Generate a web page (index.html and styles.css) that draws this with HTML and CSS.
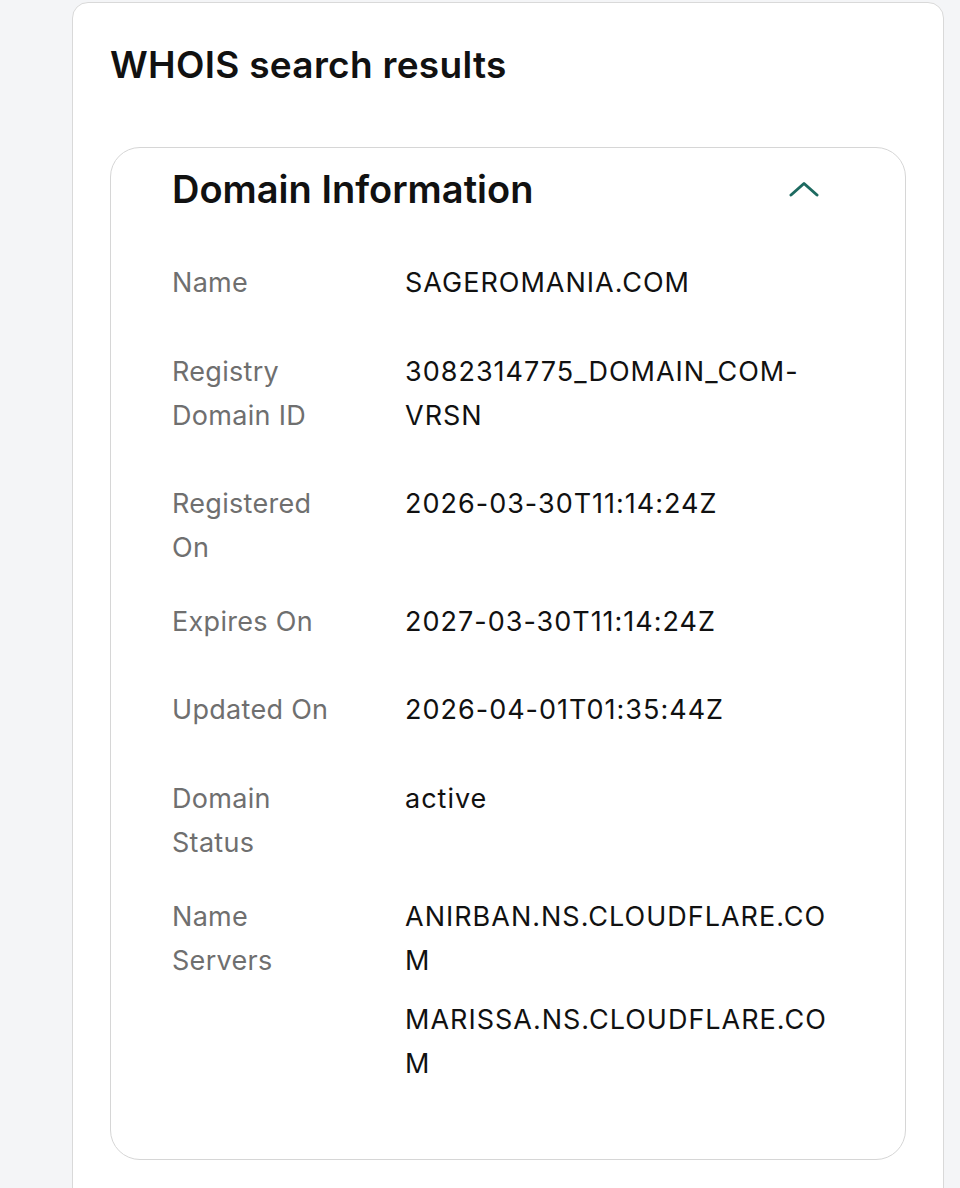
FILE: index.html
```html
<!DOCTYPE html>
<html lang="en">
<head>
<meta charset="utf-8">
<title>WHOIS search results</title>
<link rel="stylesheet" href="styles.css">
</head>
<body>
<div class="page">
  <section class="card">
    <h1 class="title">WHOIS search results</h1>
    <div class="panel">
      <div class="panel-head">
        <h2 class="panel-title">Domain Information</h2>
        <button class="toggle" aria-label="Collapse">
          <svg width="30" height="16" viewBox="0 0 30 16"><path d="M2 14 L15 2.5 L28 14" fill="none" stroke="#1d6a60" stroke-width="3" stroke-linecap="round" stroke-linejoin="round"/></svg>
        </button>
      </div>
      <dl class="info">
        <div class="row"><dt>Name</dt><dd><p>SAGEROMANIA.COM</p></dd></div>
        <div class="row"><dt>Registry Domain ID</dt><dd><p>3082314775_DOMAIN_COM-VRSN</p></dd></div>
        <div class="row"><dt>Registered On</dt><dd><p>2026-03-30T11:14:24Z</p></dd></div>
        <div class="row"><dt>Expires On</dt><dd><p>2027-03-30T11:14:24Z</p></dd></div>
        <div class="row"><dt>Updated On</dt><dd><p>2026-04-01T01:35:44Z</p></dd></div>
        <div class="row"><dt>Domain Status</dt><dd><p>active</p></dd></div>
        <div class="row"><dt>Name Servers</dt><dd><p>ANIRBAN.NS.CLOUDFLARE.COM</p><p>MARISSA.NS.CLOUDFLARE.COM</p></dd></div>
      </dl>
    </div>
  </section>
</div>
</body>
</html>
```

FILE: styles.css
```css
* { box-sizing: border-box; }
html, body { margin: 0; padding: 0; }
body {
  background: #f4f5f7;
  font-family: "Inter", "Liberation Sans", sans-serif;
  color: #111;
  height: 1188px;
  overflow: hidden;
}
.page {
  padding: 2px 16px 0 72px;
}
.card {
  background: #fff;
  border: 1.5px solid #d9d9d9;
  border-radius: 16px;
  padding: 40px 37px 60px 37px;
  min-height: 1300px;
}
.title {
  margin: 0;
  font-size: 37px;
  line-height: 44px;
  font-weight: 600;
  letter-spacing: 0.3px;
  color: #111;
}
.panel {
  margin-top: 60px;
  border: 1.5px solid #d6d6d6;
  border-radius: 30px;
  padding: 19px 62px 29px 61px;
}
.panel-head {
  display: flex;
  align-items: center;
  justify-content: space-between;
  height: 44px;
  margin-bottom: 50px;
}
.panel-title {
  margin: 0;
  font-size: 38px;
  line-height: 44px;
  font-weight: 600;
  color: #111;
}
.toggle {
  background: none;
  border: 0;
  padding: 0;
  margin-right: 24px;
  display: flex;
}
.info { margin: 0; }
.row {
  display: grid;
  grid-template-columns: 168px 1fr;
  column-gap: 65px;
  padding-bottom: 29.6px;
  font-size: 27px;
  line-height: 44px;
}
.row dt {
  color: #6f6f6f;
  letter-spacing: 0.3px;
}
.row dd {
  margin: 0;
  color: #111;
  letter-spacing: 1px;
  overflow-wrap: anywhere;
}
.row dd p {
  margin: 0 0 15px 0;
}
```
